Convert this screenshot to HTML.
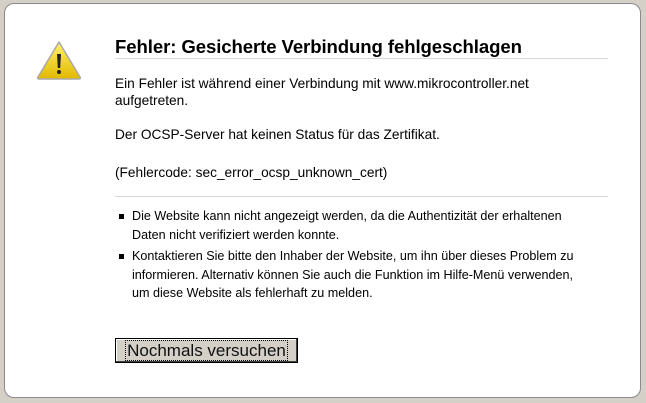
<!DOCTYPE html>
<html><head><meta charset="utf-8"><style>
html,body{margin:0;padding:0;width:646px;height:403px;background:#d4d0c8;overflow:hidden;font-family:"Liberation Sans","DejaVu Sans",sans-serif;color:#000}
.box{position:absolute;left:4px;top:3px;width:635px;height:393px;background:#fff;border:1px solid #8a8a8a;border-radius:10px}
.t{position:absolute;left:115px;top:36px;font-size:18.6px;font-weight:bold;letter-spacing:-0.1px}
.hr1{position:absolute;left:115px;top:58px;width:493px;height:1px;background:#d8d8d8}
.p{position:absolute;left:115px;font-size:13.7px;line-height:17px}
.hr2{position:absolute;left:115px;top:196px;width:493px;height:1px;background:#d8d8d8}
ul{position:absolute;left:132px;top:207px;margin:0;padding:0;width:480px;font-size:12.6px;line-height:18.5px;list-style:none}
li{position:relative;margin-bottom:3px}
li:before{content:"";position:absolute;left:-13px;top:7px;width:5px;height:5px;background:#000}
.btn{position:absolute;left:115px;top:338px;width:183px;height:25px;box-sizing:border-box;background:#d4d0c8;border:1px solid #000;box-shadow:inset -1px -1px 0 #404040,inset 1px 1px 0 #fff;font-size:17px;text-align:center;line-height:23px;color:#111}
.btn span{outline:1px dotted #000;padding:0 1px}
</style></head><body>
<div class="box"></div>
<svg style="position:absolute;left:36px;top:40px" width="46" height="40" viewBox="0 0 46 40">
<defs><linearGradient id="g" x1="0" y1="0" x2="0" y2="1"><stop offset="0" stop-color="#fff26a"/><stop offset="1" stop-color="#e2b800"/></linearGradient></defs>
<path d="M23 2 L44 37 Q45 39 43 39 L3 39 Q1 39 2 37 Z" fill="url(#g)" stroke="#a9a9a9" stroke-width="1.5" stroke-linejoin="round"/>
<path d="M21 14 L25 14 L24.2 28 L21.8 28 Z" fill="#222"/>
<circle cx="23" cy="32" r="2" fill="#222"/>
</svg>
<div class="t">Fehler: Gesicherte Verbindung fehlgeschlagen</div>
<div class="hr1"></div>
<div class="p" style="top:75px">Ein Fehler ist während einer Verbindung mit www.mikrocontroller.net<br>aufgetreten.</div>
<div class="p" style="top:126px">Der OCSP-Server hat keinen Status für das Zertifikat.</div>
<div class="p" style="top:164px">(Fehlercode: sec_error_ocsp_unknown_cert)</div>
<div class="hr2"></div>
<ul>
<li>Die Website kann nicht angezeigt werden, da die Authentizität der erhaltenen<br>Daten nicht verifiziert werden konnte.</li>
<li>Kontaktieren Sie bitte den Inhaber der Website, um ihn über dieses Problem zu<br>informieren. Alternativ können Sie auch die Funktion im Hilfe-Menü verwenden,<br>um diese Website als fehlerhaft zu melden.</li>
</ul>
<div class="btn"><span>Nochmals versuchen</span></div>
</body></html>
